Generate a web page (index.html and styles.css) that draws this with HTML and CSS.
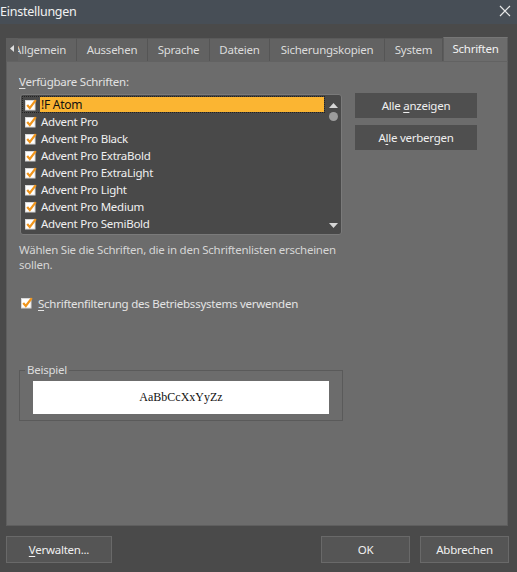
FILE: index.html
```html
<!DOCTYPE html>
<html lang="de">
<head>
  <meta charset="UTF-8">
  <title>Einstellungen</title>
  <link rel="stylesheet" href="styles.css">
</head>
<body>
  <div class="titlebar">
    <span class="title">Einstellungen</span>
    <svg class="close" width="12" height="12" viewBox="0 0 12 12">
      <path d="M1 1 L11 11 M11 1 L1 11" stroke="#e8e8e8" stroke-width="1.2" fill="none"/>
    </svg>
  </div>

  <div class="tabstrip">
    <div class="tab tab-first"><span>Allgemein</span></div>
    <div class="tab w-aussehen">Aussehen</div>
    <div class="tab w-sprache">Sprache</div>
    <div class="tab w-dateien">Dateien</div>
    <div class="tab w-sicherung">Sicherungskopien</div>
    <div class="tab w-system">System</div>
    <div class="tab active">Schriften</div>
    <div class="tab-scroll">
      <svg width="4" height="7" viewBox="0 0 4 7"><path d="M4 0 L0 3.5 L4 7 Z" fill="#e0e0e0"/></svg>
    </div>
  </div>

  <div class="pane">
    <div class="fonts-row">
      <div class="fonts-col">
        <div class="label"><u>V</u>erfügbare Schriften:</div>
        <div class="fontlist">
          <div class="items">
            <div class="item focused">
              <svg class="cb" width="12" height="12" viewBox="0 0 12 12"><rect x="0.5" y="1.5" width="9.5" height="9.5" fill="#fff" stroke="#d8d8d8"/><path d="M2.2 6 L4.8 9 L10.8 1.2" stroke="#f0951c" stroke-width="2.2" fill="none"/></svg>
              <span class="name selected">!F Atom</span>
            </div>
            <div class="item">
              <svg class="cb" width="12" height="12" viewBox="0 0 12 12"><rect x="0.5" y="1.5" width="9.5" height="9.5" fill="#fff" stroke="#d8d8d8"/><path d="M2.2 6 L4.8 9 L10.8 1.2" stroke="#f0951c" stroke-width="2.2" fill="none"/></svg>
              <span class="name">Advent Pro</span>
            </div>
            <div class="item">
              <svg class="cb" width="12" height="12" viewBox="0 0 12 12"><rect x="0.5" y="1.5" width="9.5" height="9.5" fill="#fff" stroke="#d8d8d8"/><path d="M2.2 6 L4.8 9 L10.8 1.2" stroke="#f0951c" stroke-width="2.2" fill="none"/></svg>
              <span class="name">Advent Pro Black</span>
            </div>
            <div class="item">
              <svg class="cb" width="12" height="12" viewBox="0 0 12 12"><rect x="0.5" y="1.5" width="9.5" height="9.5" fill="#fff" stroke="#d8d8d8"/><path d="M2.2 6 L4.8 9 L10.8 1.2" stroke="#f0951c" stroke-width="2.2" fill="none"/></svg>
              <span class="name">Advent Pro ExtraBold</span>
            </div>
            <div class="item">
              <svg class="cb" width="12" height="12" viewBox="0 0 12 12"><rect x="0.5" y="1.5" width="9.5" height="9.5" fill="#fff" stroke="#d8d8d8"/><path d="M2.2 6 L4.8 9 L10.8 1.2" stroke="#f0951c" stroke-width="2.2" fill="none"/></svg>
              <span class="name">Advent Pro ExtraLight</span>
            </div>
            <div class="item">
              <svg class="cb" width="12" height="12" viewBox="0 0 12 12"><rect x="0.5" y="1.5" width="9.5" height="9.5" fill="#fff" stroke="#d8d8d8"/><path d="M2.2 6 L4.8 9 L10.8 1.2" stroke="#f0951c" stroke-width="2.2" fill="none"/></svg>
              <span class="name">Advent Pro Light</span>
            </div>
            <div class="item">
              <svg class="cb" width="12" height="12" viewBox="0 0 12 12"><rect x="0.5" y="1.5" width="9.5" height="9.5" fill="#fff" stroke="#d8d8d8"/><path d="M2.2 6 L4.8 9 L10.8 1.2" stroke="#f0951c" stroke-width="2.2" fill="none"/></svg>
              <span class="name">Advent Pro Medium</span>
            </div>
            <div class="item">
              <svg class="cb" width="12" height="12" viewBox="0 0 12 12"><rect x="0.5" y="1.5" width="9.5" height="9.5" fill="#fff" stroke="#d8d8d8"/><path d="M2.2 6 L4.8 9 L10.8 1.2" stroke="#f0951c" stroke-width="2.2" fill="none"/></svg>
              <span class="name">Advent Pro SemiBold</span>
            </div>
          </div>
          <div class="scrollbar">
            <svg width="9" height="5" viewBox="0 0 9 5"><path d="M4.5 0 L9 5 L0 5 Z" fill="#d6d6d6"/></svg>
            <div class="thumb"></div>
            <div class="spacer"></div>
            <svg width="9" height="5" viewBox="0 0 9 5"><path d="M0 0 L9 0 L4.5 5 Z" fill="#d6d6d6"/></svg>
          </div>
        </div>
      </div>
      <div class="side-buttons">
        <div class="btn"><span>Alle <u>a</u>nzeigen</span></div>
        <div class="btn"><span>A<u>l</u>le verbergen</span></div>
      </div>
    </div>

    <p class="hint">Wählen Sie die Schriften, die in den Schriftenlisten erscheinen sollen.</p>

    <div class="check">
      <svg class="cb" width="12" height="12" viewBox="0 0 12 12"><rect x="0.5" y="1.5" width="9.5" height="9.5" fill="#fff" stroke="#d8d8d8"/><path d="M2.2 6 L4.8 9 L10.8 1.2" stroke="#f0951c" stroke-width="2.2" fill="none"/></svg>
      <span><u>S</u>chriftenfilterung des Betriebssystems verwenden</span>
    </div>

    <fieldset class="sample">
      <legend>Beispiel</legend>
      <div class="sample-box">AaBbCcXxYyZz</div>
    </fieldset>
  </div>

  <div class="footer">
    <div class="btn btn-manage"><span><u>V</u>erwalten...</span></div>
    <div class="footer-right">
      <div class="btn btn-ok">OK</div>
      <div class="btn btn-cancel">Abbrechen</div>
    </div>
  </div>
</body>
</html>
```

FILE: styles.css
```css
body {
  margin: 0;
  width: 517px;
  height: 572px;
  overflow: hidden;
  background-color: #4a4a4a;
  font-family: "Noto Sans", "Open Sans", sans-serif;
  font-size: 11.5px;
  letter-spacing: -0.25px;
  color: #e8e8e8;
}
u {
  text-decoration-thickness: 1px;
  text-underline-offset: 2px;
}

/* title bar */
.titlebar {
  height: 24px;
  background-color: #474e56;
  display: flex;
  align-items: center;
  justify-content: space-between;
  padding-right: 6px;
}
.title {
  font-size: 12.5px;
  color: #f2f2f2;
  margin-top: -2px;
}
.close {
  margin-top: -3px;
}

/* tabs */
.tabstrip {
  position: relative;
  display: flex;
  align-items: flex-end;
  height: 24px;
  margin-top: 13px;
  padding-left: 18px;
}
.tab {
  height: 23px;
  box-sizing: border-box;
  display: flex;
  align-items: center;
  justify-content: center;
  background-color: #626262;
  color: #dcdcdc;
  border-right: 1px solid #555555;
  border-top: 1px solid #5a5a5a;
  padding-bottom: 1px;
}
/* strip is scrolled: the first tab starts under the scroll arrow */
.tab-first {
  width: 71px;
  margin-left: -12px;
  justify-content: flex-end;
  padding-right: 10px;
}
.tab-first span {
  white-space: nowrap;
}
.w-aussehen { width: 71px; }
.w-sprache { width: 62px; }
.w-dateien { width: 60px; }
.w-sicherung { width: 115px; }
.w-system { width: 58px; }
.tab.active {
  width: 65px;
  height: 24px;
  background-color: #6c6c6c;
  color: #f2f2f2;
  border-right: 1px solid #5c5c5c;
  border-left: 1px solid #5c5c5c;
  border-top: 1px solid #767676;
  padding-bottom: 3px;
}
.tab-scroll {
  position: absolute;
  left: 6px;
  bottom: 0;
  width: 12px;
  height: 23px;
  background-color: #5e5e5e;
  display: flex;
  align-items: center;
  justify-content: center;
  padding-bottom: 2px;
  box-sizing: border-box;
}

/* main pane */
.pane {
  margin-left: 6px;
  width: 502px;
  height: 465px;
  box-sizing: border-box;
  background-color: #6c6c6c;
  border: 1px solid #5e5e5e;
  border-top-color: #626262;
  padding: 12px 12px 0 12px;
}
.fonts-row {
  display: flex;
  gap: 13px;
}
.label {
  line-height: 16px;
  color: #e2e2e2;
}
.fontlist {
  margin-top: 4px;
  margin-left: 1px;
  width: 322px;
  height: 141px;
  box-sizing: border-box;
  background-color: #494949;
  border: 1px solid #7a7a7a;
  border-radius: 3px;
  display: flex;
}
.items {
  flex: 1;
  padding: 1px 0 0 1px;
}
.item {
  height: 17px;
  box-sizing: border-box;
  display: flex;
  align-items: center;
  padding-left: 2px;
  border: 1px solid transparent;
  color: #f0f0f0;
}
.item.focused {
  border: 1px dotted #222;
}
.cb {
  flex: none;
  margin-right: 3px;
}
.name {
  flex: 1;
  height: 15px;
  line-height: 15px;
  padding-left: 1px;
}
.name.selected {
  background-color: #fbb532;
  color: #111111;
  font-size: 12px;
}
.scrollbar {
  width: 16px;
  display: flex;
  flex-direction: column;
  align-items: center;
  padding: 8px 0 6px 0;
}
.thumb {
  width: 9px;
  height: 9px;
  border-radius: 50%;
  background-color: #9c9c9c;
  margin-top: 4px;
}
.spacer {
  flex: 1;
}
.side-buttons {
  margin-top: 19px;
  display: flex;
  flex-direction: column;
  gap: 7px;
}
.btn {
  box-sizing: border-box;
  display: flex;
  align-items: center;
  justify-content: center;
  background-color: #4f4f4f;
  color: #f0f0f0;
}
.side-buttons .btn {
  width: 122px;
  height: 25px;
}

.hint {
  margin: 7px 0 0 0;
  width: 328px;
  line-height: 15px;
  color: #d6d6d6;
}
.check {
  margin-top: 23px;
  margin-left: 2px;
  height: 16px;
  display: flex;
  align-items: center;
  color: #e4e4e4;
}
.check .cb {
  margin-right: 5px;
}

.sample {
  margin: 51px 0 0 0;
  width: 324px;
  box-sizing: border-box;
  border: 1px solid #5a5a5a;
  padding: 3px 13px 6px 13px;
}
.sample legend {
  margin-left: -8px;
  padding: 0 2px;
  line-height: 16px;
  color: #dcdcdc;
}
.sample-box {
  height: 33px;
  background-color: #ffffff;
  color: #111111;
  font-family: "Liberation Serif", serif;
  font-size: 12px;
  letter-spacing: 0;
  display: flex;
  align-items: center;
  justify-content: center;
}

/* footer */
.footer {
  display: flex;
  justify-content: space-between;
  padding: 10px 8px 0 6px;
}
.footer-right {
  display: flex;
  gap: 10px;
}
.footer .btn {
  height: 27px;
  background-color: #555555;
  border: 1px solid #696969;
}
.btn-manage { width: 106px; }
.btn-ok { width: 89px; border-color: #7c7c7c; }
.btn-cancel { width: 89px; }
```
